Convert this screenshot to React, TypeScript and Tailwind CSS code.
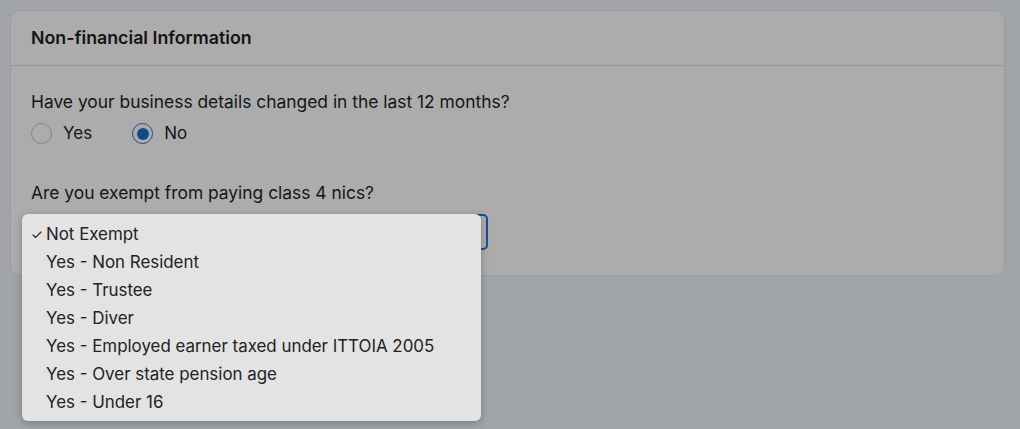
import { Check } from "lucide-react";

const options = [
  "Not Exempt",
  "Yes - Non Resident",
  "Yes - Trustee",
  "Yes - Diver",
  "Yes - Employed earner taxed under ITTOIA 2005",
  "Yes - Over state pension age",
  "Yes - Under 16",
];

function Radio({ label, checked }: { label: string; checked?: boolean }) {
  return (
    <label className="flex items-center gap-[11px]">
      <span
        className={
          checked
            ? "flex h-[21px] w-[21px] items-center justify-center rounded-full border-[1.5px] border-[#1a4f8a]"
            : "flex h-[21px] w-[21px] items-center justify-center rounded-full border border-[#858585]"
        }
      >
        {checked && <span className="h-[12px] w-[12px] rounded-full bg-[#0f4c86]" />}
      </span>
      <span className="text-[17px] text-[#161616]">{label}</span>
    </label>
  );
}

export default function App() {
  return (
    <div
      className="h-[429px] w-[1020px] bg-[#a1a4a9] pl-[10px] pt-[10px]"
      style={{ fontFamily: "Inter, 'Noto Sans', sans-serif" }}
    >
      <div className="w-[995px] rounded-[10px] border border-[#9d9d9d] bg-[#acacac]">
        <div className="flex h-[55px] items-center border-b border-[#979797] px-[20px]">
          <h2 className="text-[17.8px] font-semibold text-[#141414]">Non-financial Information</h2>
        </div>
        <div className="px-[20px] pb-[25px] pt-[24px]">
          <p className="text-[17.4px] leading-[24px] text-[#161616]">
            Have your business details changed in the last 12 months?
          </p>
          <div className="mt-[7px] flex gap-[40px]">
            <Radio label="Yes" />
            <Radio label="No" checked />
          </div>
          <p className="mt-[34px] text-[17.4px] leading-[24px] text-[#161616]">
            Are you exempt from paying class 4 nics?
          </p>
          <div className="relative mt-[9px] h-[36px] w-[457px] rounded-[5px] border-2 border-[#1a4f8a]">
            <div className="absolute -left-[11px] -top-[2px] z-10 w-[459px] rounded-[6px] bg-[#e3e3e3] pb-[4px] pt-[7px] shadow-[0_2px_8px_rgba(0,0,0,0.25)]">
              {options.map((o, i) => (
                <div key={o} className="flex h-[28px] items-center text-[16.9px] text-[#222]">
                  <span className="flex w-[24px] justify-end pr-[3px]">
                    {i === 0 && <Check size={12} strokeWidth={2.5} className="text-[#333]" />}
                  </span>
                  <span>{o}</span>
                </div>
              ))}
            </div>
          </div>
        </div>
      </div>
    </div>
  );
}
